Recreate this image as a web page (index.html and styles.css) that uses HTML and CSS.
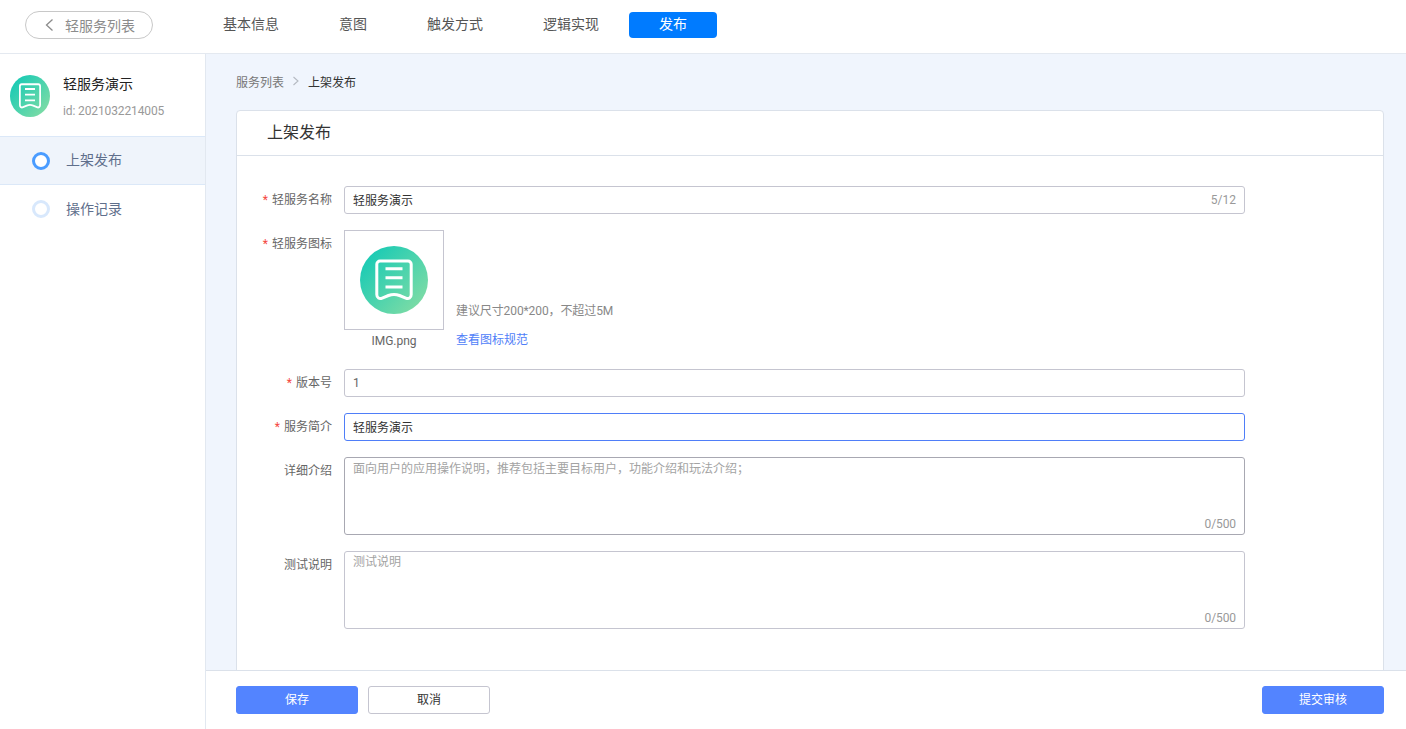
FILE: index.html
```html
<!DOCTYPE html>
<html lang="zh-CN">
<head>
<meta charset="utf-8">
<title>上架发布</title>
<link rel="stylesheet" href="styles.css">
</head>
<body>
<svg class="defs" width="0" height="0" aria-hidden="true">
  <defs>
    <linearGradient id="grad" x1="0.08" y1="0.12" x2="0.92" y2="0.88">
      <stop offset="0" stop-color="#17cab5"/>
      <stop offset="1" stop-color="#7fdca5"/>
    </linearGradient>
    <symbol id="app" viewBox="0 0 68 68" preserveAspectRatio="none">
      <circle cx="34" cy="34" r="34" fill="url(#grad)"/>
      <path d="M20 15h28a3.200 3.200 0 0 1 3.200 3.200v30.300c0 3.400-2.600 4.800-5.400 3.600l-6.300-2.600c-3.700-1.500-7.300-1.500-11 0l-6.300 2.600c-2.800 1.200-5.400-.2-5.400-3.600V18.200A3.200 3.200 0 0 1 20 15z" fill="none" stroke="#fff" stroke-width="3"/>
      <path d="M25.500 22.700h17M25.500 31.800h17M25.500 41h17" fill="none" stroke="#fff" stroke-width="3"/>
    </symbol>
  </defs>
</svg>
<header class="topbar">
  <a class="back">
    <svg class="back-icon" width="10" height="14" viewBox="0 0 10 14"><path d="M8.500 1.500L2.500 7l6 5.500" fill="none" stroke="#8c8c8c" stroke-width="1.300"/></svg>
    <span>轻服务列表</span>
  </a>
  <nav class="tabs">
    <a class="tab">基本信息</a>
    <a class="tab">意图</a>
    <a class="tab">触发方式</a>
    <a class="tab">逻辑实现</a>
    <a class="tab tab-active">发布</a>
  </nav>
</header>
<div class="body-row">
  <aside class="sidebar">
    <div class="app-head">
      <svg class="app-logo"><use href="#app"/></svg>
      <div class="app-meta">
        <div class="app-name">轻服务演示</div>
        <div class="app-id">id: 2021032214005</div>
      </div>
    </div>
    <a class="side-item side-active"><i class="ring"></i><span class="side-text">上架发布</span></a>
    <a class="side-item"><i class="ring ring-off"></i><span class="side-text">操作记录</span></a>
  </aside>
  <main class="main">
    <div class="scroll">
      <div class="crumbs">
        <span class="crumb">服务列表</span>
        <svg class="crumb-sep" width="8" height="10" viewBox="0 0 8 10"><path d="M1.500 1l4.500 4-4.500 4" fill="none" stroke="#b5bac2" stroke-width="1.100"/></svg>
        <span class="crumb-now">上架发布</span>
      </div>
      <section class="card">
        <h1 class="card-title">上架发布</h1>
        <form class="form">
          <div class="row">
            <label class="label"><em>*</em>轻服务名称</label>
            <div class="field">
              <input class="input" value="轻服务演示">
              <span class="count">5/12</span>
            </div>
          </div>
          <div class="row">
            <label class="label"><em>*</em>轻服务图标</label>
            <div class="upload">
              <div class="upload-col">
                <div class="upload-box"><svg class="upload-logo"><use href="#app"/></svg></div>
                <div class="file-name">IMG.png</div>
              </div>
              <div class="upload-info">
                <div class="hint">建议尺寸200*200，不超过5M</div>
                <a class="link">查看图标规范</a>
              </div>
            </div>
          </div>
          <div class="row">
            <label class="label"><em>*</em>版本号</label>
            <div class="field"><input class="input input-muted" value="1"></div>
          </div>
          <div class="row">
            <label class="label"><em>*</em>服务简介</label>
            <div class="field"><input class="input input-focus" value="轻服务演示"></div>
          </div>
          <div class="row">
            <label class="label">详细介绍</label>
            <div class="field">
              <textarea class="area area-hover" placeholder="面向用户的应用操作说明，推荐包括主要目标用户，功能介绍和玩法介绍；"></textarea>
              <span class="count count-area">0/500</span>
            </div>
          </div>
          <div class="row">
            <label class="label">测试说明</label>
            <div class="field">
              <textarea class="area" placeholder="测试说明"></textarea>
              <span class="count count-area">0/500</span>
            </div>
          </div>
        </form>
      </section>
    </div>
    <footer class="footer">
      <div class="footer-left">
        <button class="btn btn-primary" type="button">保存</button>
        <button class="btn" type="button">取消</button>
      </div>
      <button class="btn btn-primary" type="button">提交审核</button>
    </footer>
  </main>
</div>
</body>
</html>
```

FILE: styles.css
```css
* { box-sizing: border-box; }
html, body { height: 100%; }
body {
  margin: 0;
  height: 729px;
  overflow: hidden;
  display: flex;
  flex-direction: column;
  background: #fff;
  font-family: Roboto, "Noto Sans CJK SC", sans-serif;
  font-size: 12px;
  color: #666;
}
.defs { position: absolute; }

.topbar {
  flex: none;
  height: 54px;
  display: flex;
  align-items: flex-start;
  padding: 11px 0 0 25px;
  border-bottom: 1px solid #e4e9f0;
}
.back {
  width: 128px;
  height: 28px;
  display: flex;
  align-items: center;
  padding-left: 18px;
  gap: 11px;
  border: 1px solid #c8c8c8;
  border-radius: 14px;
  font-size: 14px;
  color: #8c8c8c;
}
.back-icon { flex: none; }
.tabs {
  display: flex;
  margin: 1px 0 0 40px;
}
.tab {
  height: 26px;
  line-height: 24px;
  padding: 0 30px;
  font-size: 14px;
  color: #555;
  border-radius: 4px;
}
.tab-active { background: #007bff; color: #fff; }

.body-row { flex: 1; min-height: 0; display: flex; }

.sidebar {
  flex: none;
  width: 206px;
  border-right: 1px solid #e2e8f0;
}
.app-head {
  height: 83px;
  display: flex;
  align-items: flex-start;
  padding: 21px 0 0 10px;
  border-bottom: 1px solid #dbe8f8;
}
.app-logo { width: 40px; height: 42px; flex: none; }
.app-meta { margin-left: 13px; margin-top: -1px; }
.app-name { font-size: 14px; line-height: 20px; color: #222; }
.app-id { margin-top: 8px; line-height: 18px; color: #999; letter-spacing: -0.12px; }
.side-item {
  height: 48px;
  display: flex;
  align-items: center;
  padding-left: 32px;
  gap: 16px;
  font-size: 14px;
  color: #5f6f8c;
}
.side-text { padding-bottom: 3px; }
.side-active {
  background: #eff4fb;
  border-bottom: 1px solid #dbe8f8;
}
.ring {
  width: 18px;
  height: 18px;
  border-radius: 50%;
  border: 3.500px solid #4a9cff;
  background: #fff;
}
.ring-off { border-color: #d8e8fc; }

.main {
  flex: 1;
  min-width: 0;
  display: flex;
  flex-direction: column;
}
.scroll {
  flex: 1;
  min-height: 0;
  overflow: hidden;
  background: #f0f5fd;
  padding: 0 22px 0 30px;
}
.crumbs {
  height: 56px;
  display: flex;
  align-items: center;
  padding-bottom: 2px;
  color: #777;
}
.crumb-sep { margin: 0 8px 0 8px; }
.crumb-now { color: #333; }

.card {
  background: #fff;
  border: 1px solid #dbe1ea;
  border-radius: 4px 4px 0 0;
  min-height: 700px;
}
.card-title {
  margin: 0;
  height: 45px;
  padding-left: 30px;
  font-size: 16px;
  font-weight: 400;
  line-height: 43px;
  color: #333;
  border-bottom: 1px solid #dbe1ea;
}
.form {
  display: flex;
  flex-direction: column;
  gap: 16px;
  padding-top: 30px;
}
.row { display: flex; align-items: flex-start; }
.label {
  flex: none;
  width: 95px;
  text-align: right;
  line-height: 28px;
  color: #666;
}
.label em {
  font-style: normal;
  color: #f5473e;
  margin-right: 4px;
}
.field {
  position: relative;
  width: 901px;
  margin-left: 12px;
}
.input, .area {
  display: block;
  width: 100%;
  font: inherit;
  color: #333;
  background: #fff;
  border: 1px solid #c5c5d0;
  border-radius: 3px;
  outline: none;
}
.input { height: 28px; padding: 0 8px 2px; }
.input-muted { color: #666; padding-bottom: 0; }
.input-focus { border-color: #4f7ef8; }
.area {
  height: 78px;
  padding: 1px 8px;
  line-height: 18px;
  resize: none;
}
.area-hover { border-color: #a8a8b2; padding-top: 2px; }
.area::placeholder { color: #a3a3a3; opacity: 1; }
.count {
  position: absolute;
  right: 9px;
  top: 5px;
  line-height: 18px;
  color: #999;
}
.count-area { top: auto; bottom: 2px; letter-spacing: -0.1px; }

.upload { display: flex; margin-left: 12px; }
.upload-col { width: 100px; height: 123px; }
.upload-box {
  width: 100px;
  height: 100px;
  display: flex;
  align-items: center;
  justify-content: center;
  border: 1px solid #c5c5d0;
}
.upload-logo { width: 68px; height: 68px; }
.file-name { margin-top: 3px; line-height: 16px; text-align: center; color: #666; }
.upload-info { margin: 72px 0 0 12px; }
.hint { line-height: 18px; color: #888; letter-spacing: -0.1px; }
.link { display: block; margin-top: 10px; line-height: 20px; color: #4f7ef8; }

.footer {
  flex: none;
  height: 59px;
  display: flex;
  justify-content: space-between;
  padding: 15px 22px 0 30px;
  background: #fff;
  border-top: 1px solid #dbe1ea;
}
.footer-left { display: flex; gap: 10px; }
.btn {
  width: 122px;
  height: 28px;
  padding: 0 0 3px;
  font: inherit;
  color: #333;
  background: #fff;
  border: 1px solid #c5c5d0;
  border-radius: 3px;
}
.btn-primary { background: #5384ff; border-color: #5384ff; color: #fff; }
```
